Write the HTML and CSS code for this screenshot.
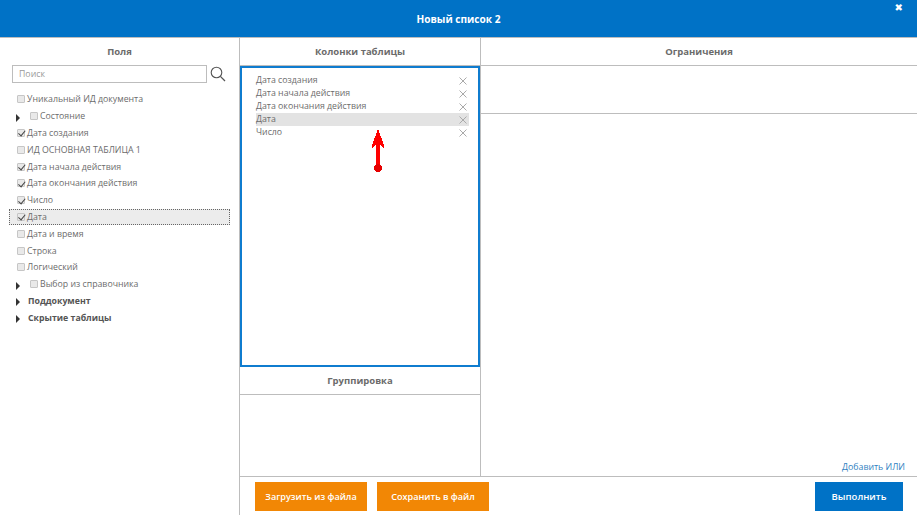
FILE: index.html
```html
<!DOCTYPE html>
<html lang="ru">
<head>
<meta charset="utf-8">
<title>Новый список 2</title>
<link rel="stylesheet" href="styles.css">
</head>
<body>
<div class="app">
  <header class="topbar">
    <span class="topbar-title">Новый список 2</span>
    <span class="topbar-close">✖</span>
  </header>
  <div class="main">
    <aside class="fields">
      <div class="fields-title">Поля</div>
      <div class="search">
        <input class="search-input" type="text" placeholder="Поиск">
        <svg class="search-icon" width="16" height="16" viewBox="0 0 16 16"><circle cx="6.5" cy="6.5" r="5.3" fill="none" stroke="#555" stroke-width="1.1"/><path d="M10.4 10.4 15 15" stroke="#555" stroke-width="1.3" fill="none"/></svg>
      </div>
      <ul class="tree">
        <li class="row"><span class="box"></span>Уникальный ИД документа</li>
        <li class="row row-sub"><span class="tri"></span><span class="box"></span>Состояние</li>
        <li class="row"><span class="box on"></span>Дата создания</li>
        <li class="row"><span class="box"></span>ИД ОСНОВНАЯ ТАБЛИЦА 1</li>
        <li class="row"><span class="box on"></span>Дата начала действия</li>
        <li class="row"><span class="box on"></span>Дата окончания действия</li>
        <li class="row"><span class="box on"></span>Число</li>
        <li class="row row-active"><span class="box on"></span>Дата</li>
        <li class="row"><span class="box"></span>Дата и время</li>
        <li class="row"><span class="box"></span>Строка</li>
        <li class="row"><span class="box"></span>Логический</li>
        <li class="row row-sub"><span class="tri"></span><span class="box"></span>Выбор из справочника</li>
        <li class="row row-group"><span class="tri"></span>Поддокумент</li>
        <li class="row row-group"><span class="tri"></span>Скрытие таблицы</li>
      </ul>
    </aside>
    <section class="middle">
      <div class="section-head">Колонки таблицы</div>
      <div class="columns">
        <div class="col-item"><span>Дата создания</span><svg class="x" width="8" height="8" viewBox="0 0 8 8"><path d="M.5.5l7 7M7.5.5l-7 7"/></svg></div>
        <div class="col-item"><span>Дата начала действия</span><svg class="x" width="8" height="8" viewBox="0 0 8 8"><path d="M.5.5l7 7M7.5.5l-7 7"/></svg></div>
        <div class="col-item"><span>Дата окончания действия</span><svg class="x" width="8" height="8" viewBox="0 0 8 8"><path d="M.5.5l7 7M7.5.5l-7 7"/></svg></div>
        <div class="col-item col-item-active"><span>Дата</span><svg class="x" width="8" height="8" viewBox="0 0 8 8"><path d="M.5.5l7 7M7.5.5l-7 7"/></svg></div>
        <div class="col-item"><span>Число</span><svg class="x" width="8" height="8" viewBox="0 0 8 8"><path d="M.5.5l7 7M7.5.5l-7 7"/></svg></div>
        <svg class="arrow" width="14" height="44" viewBox="0 0 14 44" shape-rendering="crispEdges"><path d="M7 0 L13 16 V19 L9 16 V37 H5 V16 L1 19 V16 Z" fill="#f00"/><circle cx="7" cy="39" r="4" fill="#e60000"/></svg>
      </div>
      <div class="section-head group-head">Группировка</div>
      <div class="group-body"></div>
    </section>
    <section class="limits">
      <div class="section-head">Ограничения</div>
      <div class="limits-top"></div>
      <div class="limits-body"><a class="add-or">Добавить ИЛИ</a></div>
    </section>
    <footer class="actions">
      <button class="btn btn-orange">Загрузить из файла</button>
      <button class="btn btn-orange">Сохранить в файл</button>
      <button class="btn btn-blue">Выполнить</button>
    </footer>
  </div>
</div>
</body>
</html>
```
FILE: styles.css
```css
* { box-sizing: border-box; }
html, body { margin: 0; height: 100%; }
body { font-family: "Open Sans", sans-serif; font-size: 8.75px; color: #6b6b6b; background: #fff; overflow: hidden; }
.app { width: 917px; height: 515px; display: flex; flex-direction: column; }
.topbar { position: relative; height: 37px; flex: none; background: #0072c6; display: flex; align-items: center; justify-content: center; }
.topbar-title { color: #fff; font-weight: 700; font-size: 10.1px; }
.topbar-close { position: absolute; right: 14px; top: 1px; color: #fff; font-family: "DejaVu Sans", sans-serif; font-size: 10px; line-height: 13px; }
.main { flex: 1; display: grid; grid-template-columns: 240px 241px 1fr; grid-template-rows: 438px 39px; border-top: 1px solid #bdbdbd; min-height: 0; }
.fields { grid-row: 1 / 3; border-right: 1px solid #bdbdbd; padding: 0 9px 0 9px; }
.fields-title { height: 27px; line-height: 27px; text-align: center; font-weight: 700; font-size: 9.5px; }
.search { display: flex; align-items: center; gap: 3px; padding-left: 3px; height: 18px; }
.search-input { width: 195px; height: 18px; border: 1px solid #bdbdbd; padding: 0 6px; font: 8.75px "Open Sans", sans-serif; color: #666; outline: none; }
.search-input::placeholder { color: #999; opacity: 1; }
.search-icon { flex: none; }
.tree { list-style: none; margin: 8px 0 0; padding: 0; }
.row { height: 16.8px; display: flex; align-items: center; padding-left: 8px; white-space: nowrap; }
.row-sub { padding-left: 7px; }
.row-group { padding-left: 7px; font-weight: 700; color: #555; }
.row-active { background: #ececec; outline: 1px dotted #666; outline-offset: -1px; }
.box { width: 8px; height: 8px; flex: none; margin-right: 2px; border: 1px solid #c6c6c6; border-radius: 1px; background: #e9e9e9; position: relative; }
.box.on::after { content: ""; position: absolute; left: 1.5px; top: -0.5px; width: 3px; height: 5.5px; border: solid #444; border-width: 0 1.5px 1.5px 0; transform: rotate(40deg); }
.tri { width: 0; height: 0; flex: none; margin: 3px 10px 0 0; border-style: solid; border-width: 4px 0 4px 4px; border-color: transparent transparent transparent #333; }
.row-sub .box { margin-right: 2px; }
.row-group .tri { margin-right: 8px; }
.middle { border-right: 1px solid #bdbdbd; display: flex; flex-direction: column; min-height: 0; }
.section-head { height: 28px; flex: none; line-height: 27px; text-align: center; font-weight: 700; font-size: 9.5px; border-bottom: 1px solid #bdbdbd; }
.columns { position: relative; height: 301px; flex: none; border: 2px solid #0f7ccf; padding: 6px 9px 0 14px; }
.col-item { height: 13px; display: flex; align-items: center; justify-content: space-between; padding-right: 2px; line-height: 13px; }
.col-item-active { background: #e3e3e3; }
.x { fill: none; stroke: #aaa; stroke-width: 1; flex: none; }
.arrow { position: absolute; left: 129px; top: 61px; }
.group-head { border-bottom: 1px solid #bdbdbd; }
.group-body { flex: 1; }
.limits { display: flex; flex-direction: column; min-height: 0; }
.limits-top { height: 48px; flex: none; border-bottom: 1px solid #bdbdbd; }
.limits-body { flex: 1; display: flex; align-items: flex-end; justify-content: flex-end; padding: 0 12px 3px 0; }
.add-or { color: #2f7fc1; font-size: 8.75px; line-height: 12px; }
.actions { grid-column: 2 / 4; border-top: 1px solid #bdbdbd; display: flex; align-items: flex-start; gap: 10px; padding: 5px 14px 0 15px; }
.btn { height: 29px; border: 0; padding: 0; color: #fff; font: 600 9.1px "Open Sans", sans-serif; }
.btn-orange { width: 112px; background: #f28705; }
.btn-blue { width: 88px; margin-left: auto; background: #0072c6; font-size: 9.5px; }
```
